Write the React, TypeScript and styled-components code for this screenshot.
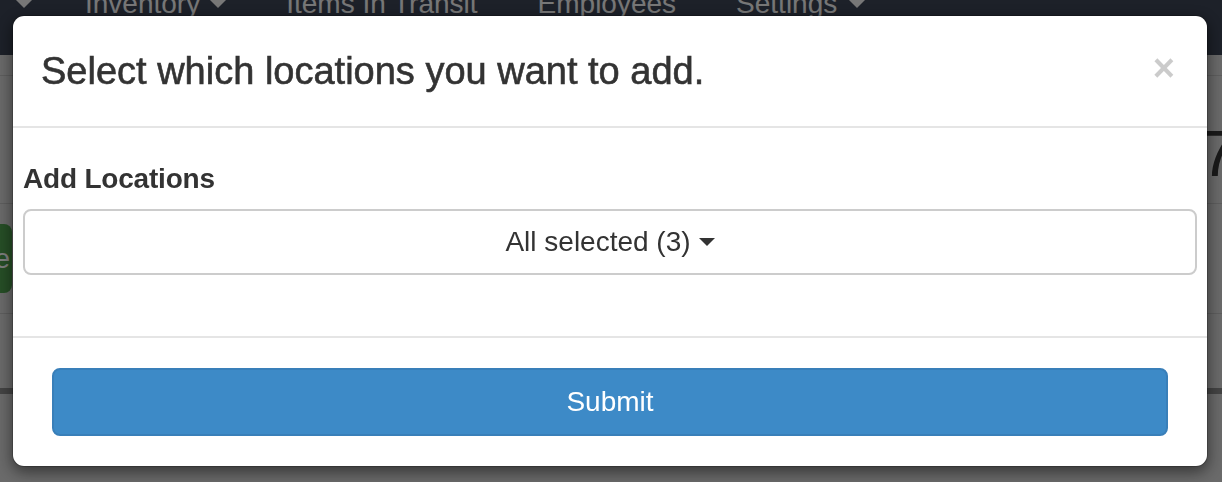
import React, {FC} from 'react';
import styled, {createGlobalStyle} from 'styled-components';

const GlobalStyle = createGlobalStyle`
    html, body {
        margin: 0;
        padding: 0;
        height: 100%;
        overflow: hidden;
        background: #d4d4d4;
        font-family: "Liberation Sans", Arial, Helvetica, sans-serif;
    }
`;

// page behind the modal
const Page = styled.div`
    display: flex;
    flex-direction: column;
    height: 482px;
    background: #d4d4d4;
`;

const Navbar = styled.nav`
    height: 55px;
    flex-shrink: 0;
    background: #3a4252;
    overflow: hidden;
`;

const NavList = styled.ul`
    display: flex;
    list-style: none;
    margin: -16px 0 0;
    padding: 0;
`;

const NavItem = styled.li`
    display: flex;
    align-items: center;
    padding: 0 30px;
    font-size: 28px;
    line-height: 40px;
    color: #eeeeee;

    &:first-child {
        padding: 0 0 0 8px;
        width: 47px;
    }
`;

const Caret = styled.span<{$color?: string; $gap?: number}>`
    display: inline-block;
    width: 0;
    height: 0;
    margin-left: ${p => p.$gap ?? 8}px;
    border-top: 8px solid ${p => p.$color || 'currentColor'};
    border-left: 8px solid transparent;
    border-right: 8px solid transparent;
`;

const Section = styled.div<{$height: number; $line?: string}>`
    height: ${p => p.$height}px;
    flex-shrink: 0;
    border-bottom: 1px solid ${p => p.$line || '#bcbcbc'};
    box-sizing: border-box;
    display: flex;
    align-items: flex-start;
    overflow: hidden;
`;

const StatRow = styled(Section)`
    justify-content: flex-end;
`;

const BigNumber = styled.span`
    font-size: 64px;
    line-height: 1;
    color: #333;
    margin: 46px -14px 0 0;
`;

const GreenButton = styled.div`
    margin-top: 20px;
    height: 69px;
    width: 60px;
    margin-left: -50px;
    background: #4c9c4c;
    border-radius: 8px;
    color: #fff;
    font-size: 28px;
    display: flex;
    align-items: center;
    justify-content: flex-end;
    padding-right: 2px;
`;

const DarkBand = styled.div`
    height: 6px;
    flex-shrink: 0;
    background: #888;
`;

const Backdrop = styled.div`
    position: fixed;
    inset: 0;
    background: rgba(0, 0, 0, 0.5);
`;

// modal
const Modal = styled.div`
    position: fixed;
    top: 15px;
    left: 12px;
    width: 1196px;
    box-sizing: border-box;
    background: #fff;
    border: 1px solid rgba(0, 0, 0, 0.2);
    border-radius: 12px;
    box-shadow: 0 5px 15px rgba(0, 0, 0, 0.5);
    color: #333;
    background-clip: padding-box;
`;

const ModalHeader = styled.div`
    display: flex;
    align-items: flex-start;
    justify-content: space-between;
    padding: 35px 34px 33px 28px;
    border-bottom: 2px solid #e5e5e5;
`;

const Title = styled.h4`
    margin: 0;
    font-size: 38px;
    font-weight: 400;
    line-height: 1.1;
    -webkit-text-stroke: 0.6px #333;
`;

const Close = styled.button`
    border: none;
    background: none;
    padding: 0;
    margin: -2px -2px 0 0;
    font-family: "Liberation Sans", Arial, sans-serif;
    font-size: 38px;
    font-weight: 700;
    line-height: 1;
    color: #000;
    opacity: 0.2;
    cursor: pointer;
`;

const ModalBody = styled.div`
    padding: 31px 10px 61px;
`;

const Label = styled.label`
    display: block;
    margin-bottom: 10px;
    font-size: 28px;
    font-weight: 700;
    line-height: 40px;
    letter-spacing: -0.2px;
`;

const Dropdown = styled.button`
    width: 100%;
    height: 66px;
    display: flex;
    align-items: center;
    justify-content: center;
    background: #fff;
    border: 2px solid #ccc;
    border-radius: 8px;
    font-family: inherit;
    font-size: 28px;
    color: #333;
    cursor: pointer;
`;

const ModalFooter = styled.div`
    border-top: 2px solid #e5e5e5;
    padding: 30px 39px 30px 39px;
`;

const SubmitButton = styled.button`
    width: 100%;
    height: 68px;
    background: #3d8ac7;
    border: 2px solid #397fb9;
    border-radius: 8px;
    color: #fff;
    font-family: inherit;
    font-size: 28px;
    cursor: pointer;
`;

const App: FC = () => {
    return (
        <>
            <GlobalStyle/>
            <Page>
                <Navbar>
                    <NavList>
                        <NavItem><Caret/></NavItem>
                        <NavItem>{'Inventory'}<Caret $gap={10}/></NavItem>
                        <NavItem>{'Items In Transit'}</NavItem>
                        <NavItem>{'Employees'}</NavItem>
                        <NavItem>{'Settings'}<Caret $gap={12}/></NavItem>
                    </NavList>
                </Navbar>
                <Section $height={21}/>
                <StatRow $height={128}>
                    <BigNumber>{'7'}</BigNumber>
                </StatRow>
                <Section $height={110}>
                    <GreenButton>{'e'}</GreenButton>
                </Section>
                <Section $height={74} $line={'#d4d4d4'}/>
                <DarkBand/>
            </Page>
            <Backdrop/>
            <Modal>
                <ModalHeader>
                    <Title>{'Select which locations you want to add.'}</Title>
                    <Close aria-label={'Close'}>{'×'}</Close>
                </ModalHeader>
                <ModalBody>
                    <Label>{'Add Locations'}</Label>
                    <Dropdown>
                        {'All selected (3)'}
                        <Caret $color={'#333'}/>
                    </Dropdown>
                </ModalBody>
                <ModalFooter>
                    <SubmitButton>{'Submit'}</SubmitButton>
                </ModalFooter>
            </Modal>
        </>
    );
};

export default App;
